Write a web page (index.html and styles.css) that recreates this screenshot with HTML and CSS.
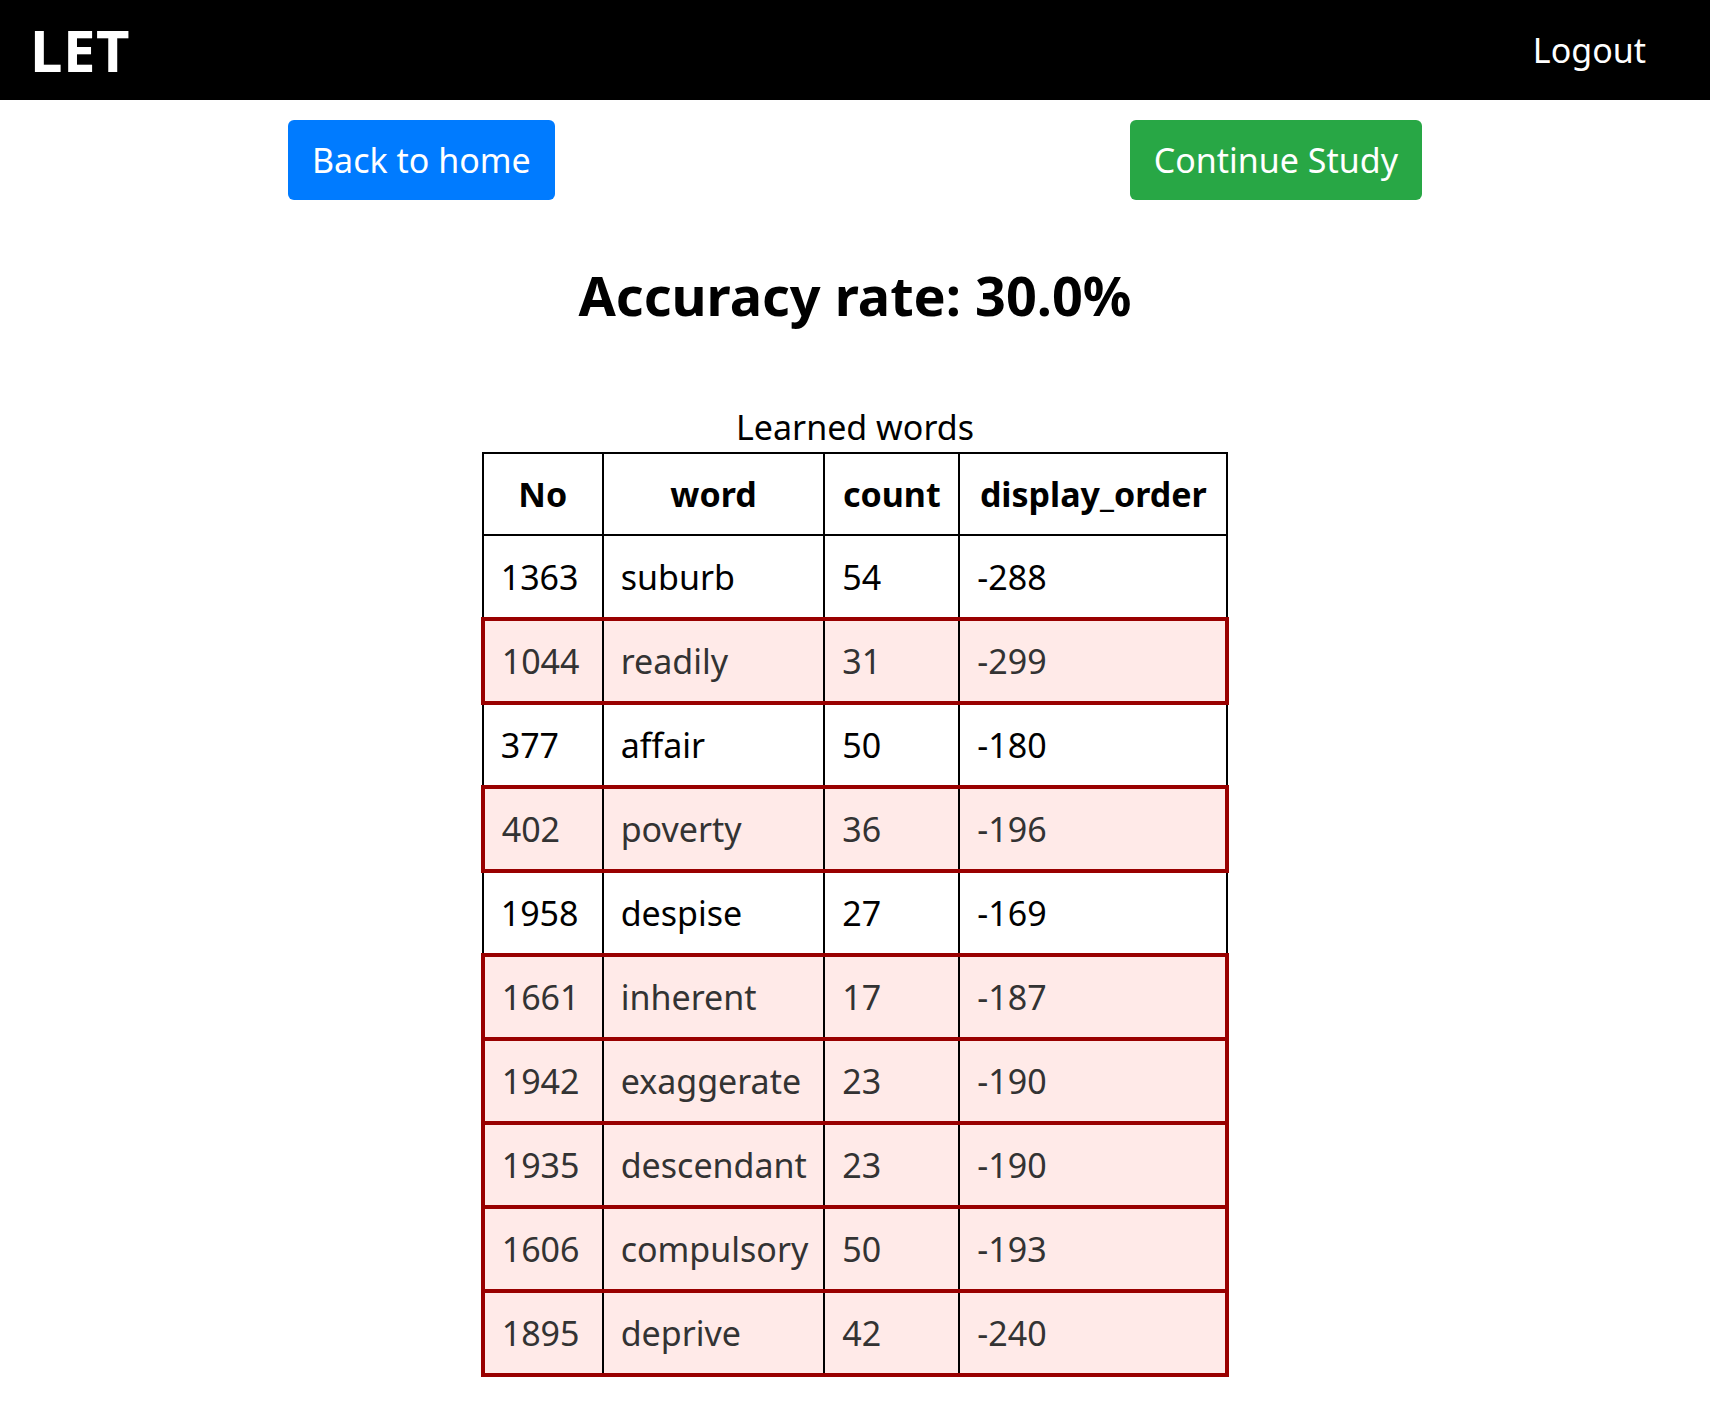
FILE: index.html
```html
<!DOCTYPE html>
<html lang="en">
<head>
<meta charset="utf-8">
<title>LET - Result</title>
<link rel="stylesheet" href="styles.css">
</head>
<body>
<header class="topbar">
  <a class="brand" href="#">LET</a>
  <a class="logout" href="#">Logout</a>
</header>
<main class="page">
  <div class="actions">
    <a class="btn btn-blue" href="#">Back to home</a>
    <a class="btn btn-green" href="#">Continue Study</a>
  </div>
  <h1 class="rate">Accuracy rate: 30.0%</h1>
  <table class="words">
    <caption>Learned words</caption>
    <colgroup>
      <col class="c-no">
      <col class="c-word">
      <col class="c-count">
      <col class="c-order">
    </colgroup>
    <thead>
      <tr><th>No</th><th>word</th><th>count</th><th>display_order</th></tr>
    </thead>
    <tbody>
      <tr><td>1363</td><td>suburb</td><td>54</td><td>-288</td></tr>
      <tr class="wrong"><td>1044</td><td>readily</td><td>31</td><td>-299</td></tr>
      <tr><td>377</td><td>affair</td><td>50</td><td>-180</td></tr>
      <tr class="wrong"><td>402</td><td>poverty</td><td>36</td><td>-196</td></tr>
      <tr><td>1958</td><td>despise</td><td>27</td><td>-169</td></tr>
      <tr class="wrong"><td>1661</td><td>inherent</td><td>17</td><td>-187</td></tr>
      <tr class="wrong"><td>1942</td><td>exaggerate</td><td>23</td><td>-190</td></tr>
      <tr class="wrong"><td>1935</td><td>descendant</td><td>23</td><td>-190</td></tr>
      <tr class="wrong"><td>1606</td><td>compulsory</td><td>50</td><td>-193</td></tr>
      <tr class="wrong"><td>1895</td><td>deprive</td><td>42</td><td>-240</td></tr>
    </tbody>
  </table>
</main>
</body>
</html>
```

FILE: styles.css
```css
html, body {
  margin: 0;
  padding: 0;
  background: #fff;
}

body {
  font-family: "Noto Sans", "Noto Sans CJK JP", sans-serif;
  color: #000;
}

a {
  text-decoration: none;
}

.topbar {
  height: 100px;
  background: #000;
  display: flex;
  align-items: center;
  justify-content: space-between;
  padding: 0 64px 0 30px;
  box-sizing: border-box;
}

.brand {
  color: #fff;
  font-weight: 700;
  font-size: 58px;
  line-height: 64px;
  letter-spacing: 0.5px;
}

.logout {
  color: #fff;
  font-size: 34px;
  line-height: 48px;
}

.page {
  width: 1134px;
  margin: 0 auto;
  padding-bottom: 40px;
}

.actions {
  margin-top: 20px;
  display: flex;
  justify-content: space-between;
}

.btn {
  display: inline-block;
  color: #fff;
  font-size: 34px;
  line-height: 48px;
  padding: 16px 24px;
  border-radius: 6px;
}

.btn-blue {
  background: #007bff;
}

.btn-green {
  background: #28a745;
}

.rate {
  margin: 63px 0 0;
  text-align: center;
  font-size: 54px;
  line-height: 64px;
  font-weight: 700;
}

.words {
  margin: 80px auto 0;
  border-collapse: collapse;
  table-layout: fixed;
  border: 2px solid #000;
  font-size: 34px;
}

.words caption {
  line-height: 40px;
  padding-bottom: 5px;
}

.c-no { width: 120px; }
.c-word { width: 220px; }
.c-count { width: 135px; }
.c-order { width: 268px; }

.words th,
.words td {
  border: 2px solid #000;
  box-sizing: border-box;
  line-height: 48px;
  padding: 0 15px 0 17px;
  vertical-align: middle;
  white-space: nowrap;
}

.words th {
  height: 82px;
  font-weight: 700;
  text-align: center;
  padding: 0 15px;
}

.words td {
  height: 84px;
  text-align: left;
}

.words tr.wrong td {
  background: #ffeae8;
  color: #333;
  border-top: 4px solid #990000;
  border-bottom: 4px solid #990000;
}

.words tr.wrong td:first-child {
  border-left: 4px solid #990000;
}

.words tr.wrong td:last-child {
  border-right: 4px solid #990000;
}
```
